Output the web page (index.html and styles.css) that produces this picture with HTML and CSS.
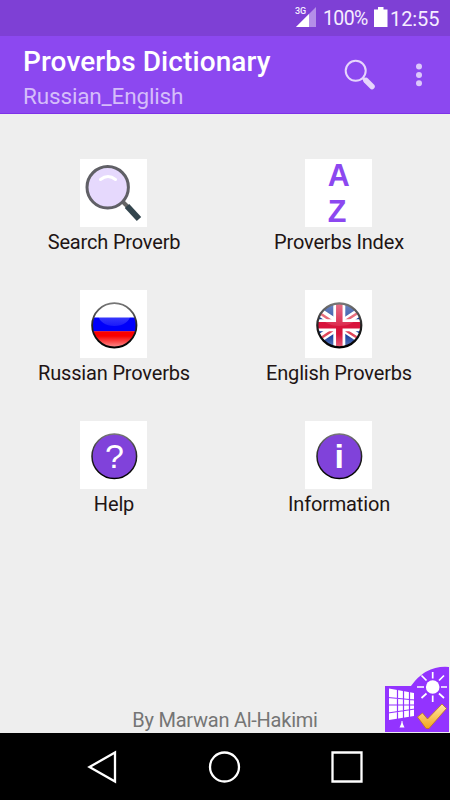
FILE: index.html
```html
<!DOCTYPE html>
<html lang="en">
<head>
<meta charset="utf-8">
<title>Proverbs Dictionary</title>
<link rel="stylesheet" href="styles.css">
</head>
<body>
<div class="screen">
  <div class="status">
    <svg class="signal" width="23" height="22" viewBox="0 0 23 22">
      <path d="M21 1V21H1Z" fill="#b48fe8"/><path d="M14 8V21H1Z" fill="#fff"/>
      <text x="0" y="8" class="net">3G</text>
    </svg>
    <span class="percent">100%</span>
    <svg class="battery" width="14" height="20" viewBox="0 0 14 20"><path d="M0 2.5H4V0H9.5V2.5H13.5V20H0Z" fill="#fff"/></svg>
    <span class="clock">12:55</span>
  </div>
  <header class="appbar">
    <div class="titles">
      <h1>Proverbs Dictionary</h1>
      <p>Russian_English</p>
    </div>
    <svg class="find" width="32" height="32" viewBox="0 0 32 32">
      <circle cx="11.7" cy="11.8" r="10" fill="none" stroke="#e6d5fc" stroke-width="2"/>
      <path d="M18.5 18.5L22 22" stroke="#e6d5fc" stroke-width="3"/>
      <path d="M22 21.5L28 27.5" stroke="#e6d5fc" stroke-width="5.5" stroke-linecap="round"/>
    </svg>
    <svg class="more" width="8" height="24" viewBox="0 0 8 24" fill="#dcc8fb"><circle cx="4" cy="3.6" r="3"/><circle cx="4" cy="12" r="3"/><circle cx="4" cy="20.3" r="3"/></svg>
  </header>
  <main>
    <div class="grid">
      <div class="item">
        <svg class="tile" viewBox="0 0 67 68">
          <path d="M43 43L48 48" stroke="#666" stroke-width="4"/>
          <path d="M47 47L59 60" stroke="#33454d" stroke-width="6"/>
          <circle cx="27.7" cy="28.3" r="20.7" fill="#e6d9fd" stroke="#606066" stroke-width="3"/>
          <path d="M20.5 20.5Q28 14.5 35.5 20.5" fill="none" stroke="#fff" stroke-width="3" stroke-linecap="round"/>
        </svg>
        <span>Search Proverb</span>
      </div>
      <div class="item">
        <svg class="tile" viewBox="0 0 67 68"><text class="az" x="22.7" y="27">A</text><text class="az" x="22.7" y="63">Z</text></svg>
        <span>Proverbs Index</span>
      </div>
      <div class="item">
        <svg class="tile" viewBox="0 0 67 68">
          <defs>
            <clipPath id="disc"><circle cx="34.3" cy="35.3" r="22"/></clipPath>
            <linearGradient id="shine" x1="0" y1="0" x2="0" y2="1"><stop offset="0" stop-color="#fff" stop-opacity=".4"/><stop offset="1" stop-color="#fff" stop-opacity=".1"/></linearGradient>
            <linearGradient id="glow" x1="0" y1="0" x2="0" y2="1"><stop offset="0" stop-color="#fff" stop-opacity="0"/><stop offset="1" stop-color="#fff" stop-opacity=".6"/></linearGradient>
            <linearGradient id="rim" x1="0" y1="0" x2="0" y2="1"><stop offset="0" stop-color="#777"/><stop offset=".5" stop-color="#222"/><stop offset="1" stop-color="#000"/></linearGradient>
          </defs>
          <g clip-path="url(#disc)">
            <path d="M10 10H60V28H10Z" fill="#fff"/><path d="M10 27.5H60V41.5H10Z" fill="#0000fa"/><path d="M10 41.2H60V60H10Z" fill="#fa0000"/>
            <ellipse cx="34.3" cy="25" rx="16" ry="11" fill="url(#shine)"/>
            <path d="M14 46H55V58H14Z" fill="url(#glow)"/>
          </g>
          <circle cx="34.3" cy="35.3" r="22.2" fill="none" stroke="url(#rim)" stroke-width="1.8"/>
        </svg>
        <span>Russian Proverbs</span>
      </div>
      <div class="item">
        <svg class="tile" viewBox="0 0 67 68">
          <g clip-path="url(#disc)">
            <path d="M10 10H60V60H10Z" fill="#123b9b"/>
            <path d="M10 19L59 51.5M59 19L10 51.5" stroke="#fff" stroke-width="8"/>
            <path d="M10 20L34 36M59 19L34 35M10 52L34 36M59 52L34 36" stroke="#e04458" stroke-width="2.5"/>
            <path d="M34.3 10V60M10 35.3H60" stroke="#fff" stroke-width="12"/>
            <path d="M34.3 10V60M10 35.3H60" stroke="#d8143c" stroke-width="6.5"/>
            <ellipse cx="34.3" cy="24" rx="19" ry="12" fill="url(#shine)"/>
            <path d="M14 44H55V59H14Z" fill="url(#glow)" opacity=".6"/>
          </g>
          <circle cx="34.3" cy="35.3" r="22" fill="none" stroke="url(#rim)" stroke-width="2.2"/>
        </svg>
        <span>English Proverbs</span>
      </div>
      <div class="item">
        <svg class="tile" viewBox="0 0 67 68"><circle cx="34.3" cy="35.3" r="22.3" fill="#8042da" stroke="url(#rim)" stroke-width="1.5"/><text class="mark" x="34.5" y="47.3">?</text></svg>
        <span>Help</span>
      </div>
      <div class="item">
        <svg class="tile" viewBox="0 0 67 68"><circle cx="34.3" cy="35.3" r="22.3" fill="#8042da" stroke="url(#rim)" stroke-width="1.5"/><text class="mark bold" x="34.3" y="47.3">i</text></svg>
        <span>Information</span>
      </div>
    </div>
    <footer>By Marwan Al-Hakimi</footer>
    <svg class="brand" width="65" height="67" viewBox="0 0 65 67">
      <defs><linearGradient id="gold" x1="0" y1="0" x2="0" y2="1"><stop offset="0" stop-color="#ffe9a8"/><stop offset="1" stop-color="#f3a51c"/></linearGradient></defs>
      <path d="M0 20H26Q41-1 64 1V66H0Z" fill="#9333ff"/>
      <circle cx="47.7" cy="21" r="6.8" fill="#fff"/>
      <path d="M47.7 6V12.5M47.7 29.5V36M32 21H39M56 21H62M36.5 9.5L41.5 14.5M59 9.5L54 14.5M36.5 32L41.5 27.5M59 32L54 27.5" stroke="#fff" stroke-width="1.7"/>
      <path d="M4 22.5L29 27V50L4 54Z" fill="#fff"/>
      <path d="M12.5 23V54M18.5 23V54M24.5 23V54M3 31.5L30 34M3 39H30M3 47L30 43" stroke="#9333ff" stroke-width="1.2" fill="none"/>
      <path d="M17 55V59" stroke="#fff"/><path d="M17 56L19.5 61.5H14.5Z" fill="#fff"/>
      <path d="M32.5 51L37.5 47L42.5 53L57 38L61.500 42.5L44 62.5H41Z" fill="url(#gold)" stroke="#bd771d" stroke-width=".8" stroke-linejoin="round"/>
    </svg>
  </main>
  <nav>
    <svg width="34" height="34" viewBox="0 0 34 34"><path d="M4.500 17L30 2.500V31.500Z"/></svg>
    <svg width="34" height="34" viewBox="0 0 34 34"><circle cx="16.500" cy="17" r="14.500"/></svg>
    <svg width="34" height="34" viewBox="0 0 34 34"><path d="M2.500 2.500H31.500V31.500H2.500Z"/></svg>
  </nav>
</div>
</body>
</html>
```
FILE: styles.css
```css
* { box-sizing: border-box; }
body { margin: 0; font-family: Roboto, "Liberation Sans", sans-serif; }
h1, p { margin: 0; white-space: nowrap; }
svg { display: block; flex: none; }
.screen { width: 450px; height: 800px; display: flex; flex-direction: column; background: #eee; overflow: hidden; }
.status { height: 36px; flex: none; background: #7e40d5; color: #f5edff; display: flex; align-items: flex-start; padding-left: 295px; font-size: 20px; line-height: 24px; }
.signal { margin-top: 6px; }
.net { font: 500 9px Roboto, sans-serif; fill: #f5edff; }
.percent { margin: 7px 0 0 5px; width: 51px; font-size: 19.5px; letter-spacing: -.6px; white-space: nowrap; }
.battery { margin-top: 7px; }
.clock { margin: 7px 0 0 2px; letter-spacing: -.1px; }
.appbar { height: 78px; flex: none; background: #8c48f0; border-bottom: 1px solid #7e32e8; display: flex; align-items: flex-start; padding-left: 23px; }
.titles { width: 321px; padding-top: 9px; }
h1 { font-size: 28px; line-height: 34px; font-weight: 500; letter-spacing: .1px; color: #fff; }
.titles p { font-size: 22.5px; line-height: 34px; letter-spacing: -.15px; color: #d5bdfa; }
.find { margin-top: 23px; }
.more { margin: 27px 0 0 39px; }
main { position: relative; flex: 1; padding-top: 45px; display: flex; flex-direction: column; justify-content: space-between; }
.grid { display: grid; grid-template-columns: 1fr 1fr; grid-auto-rows: 131px; }
.item { display: flex; flex-direction: column; align-items: center; color: #211414; font-size: 20px; line-height: 24px; letter-spacing: -.17px; white-space: nowrap; padding-left: 2px; }
.item span { padding-left: 1px; }
.tile { width: 67px; height: 68px; background: #fff; margin-bottom: 3px; letter-spacing: 0; }
.az { font: bold 30.5px "Liberation Sans", sans-serif; fill: #8c48f0; }
.mark { font: 34px "Liberation Sans", sans-serif; fill: #fff; text-anchor: middle; }
.mark.bold { font-weight: bold; }
footer { text-align: center; font-size: 20px; line-height: 24px; letter-spacing: -.25px; padding-bottom: 1px; color: #757575; }
.brand { position: absolute; right: 0; bottom: 0; }
nav { height: 67px; flex: none; background: #000; display: flex; justify-content: space-between; align-items: center; padding: 0 86px 0 85px; }
nav path, nav circle { fill: none; stroke: #fff; stroke-width: 2.3; }
```
